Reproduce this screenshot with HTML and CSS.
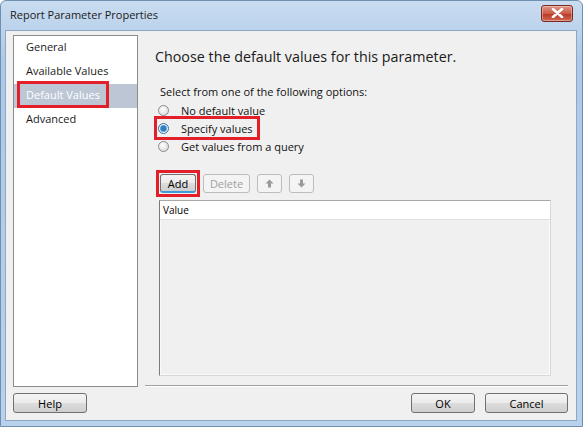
FILE: index.html
```html
<!DOCTYPE html>
<html lang="en">
<head>
  <meta charset="UTF-8">
  <title>Report Parameter Properties</title>
  <link rel="stylesheet" href="styles.css">
</head>
<body>
  <div class="window">
    <div class="titlebar">
      <span class="title">Report Parameter Properties</span>
      <button class="close" aria-label="Close">
        <svg width="13" height="10" viewBox="0 0 13 10">
          <path d="M2 1 L11 9 M11 1 L2 9" stroke="#fff" stroke-width="2.6" stroke-linecap="round"/>
        </svg>
      </button>
    </div>

    <div class="client">
      <div class="main">
        <ul class="nav">
          <li>General</li>
          <li>Available Values</li>
          <li class="selected"><span class="mark">Default Values</span></li>
          <li>Advanced</li>
        </ul>

        <div class="page">
          <h2>Choose the default values for this parameter.</h2>
          <p class="hint">Select from one of the following options:</p>
          <div class="opt"><label><span class="radio"></span>No default value</label></div>
          <div class="opt"><label class="mark"><span class="radio checked"></span>Specify values</label></div>
          <div class="opt"><label><span class="radio"></span>Get values from a query</label></div>

          <div class="tools">
            <span class="mark add-mark"><button class="btn small focus">Add</button></span>
            <button class="btn small delete" disabled>Delete</button>
            <button class="btn small icon" disabled>
              <svg width="9" height="9" viewBox="0 0 9 9"><path d="M4.5 0.5 L8.5 4.5 H6 V8.5 H3 V4.5 H0.5 Z" fill="#9a9a9a"/></svg>
            </button>
            <button class="btn small icon" disabled>
              <svg width="9" height="9" viewBox="0 0 9 9"><path d="M4.5 8.5 L8.5 4.5 H6 V0.5 H3 V4.5 H0.5 Z" fill="#9a9a9a"/></svg>
            </button>
          </div>

          <div class="grid">
            <div class="grid-head">Value</div>
          </div>
        </div>
      </div>

      <div class="footer">
        <button class="btn help">Help</button>
        <div class="actions">
          <button class="btn ok">OK</button>
          <button class="btn cancel">Cancel</button>
        </div>
      </div>
    </div>
  </div>
</body>
</html>
```

FILE: styles.css
```css
body {
  margin: 0;
  font-family: "Open Sans", "DejaVu Sans", sans-serif;
  font-size: 11px;
  color: #000;
  background: #fff;
}
.window {
  width: 583px;
  height: 427px;
  box-sizing: border-box;
  background: linear-gradient(#c9dcf0, #adc9e7 60px, #b8d1ec);
  border: 1px solid #6f8fb0;
  border-radius: 6px 6px 0 0;
  display: flex;
  flex-direction: column;
}
.titlebar {
  height: 27px;
  display: flex;
  align-items: center;
  justify-content: space-between;
  padding: 0 9px 2px 9px;
}
.title {
  font-size: 11px;
  color: #1a1a1a;
}
.close {
  width: 32px;
  height: 17px;
  margin-top: -3px;
  border: 1px solid #7a2a22;
  border-radius: 3px;
  background: linear-gradient(#e09584, #cc5a48 50%, #b93424 51%, #d06a52);
  display: flex;
  align-items: center;
  justify-content: center;
  padding: 0;
  box-shadow: inset 0 0 0 1px rgba(255,255,255,0.35);
}
.client {
  flex: 1;
  margin: 0 5px 5px 4px;
  background: #f0f0f0;
  border: 1px solid #8ea7c4;
  padding: 4px 8px 0 7px;
  display: flex;
  flex-direction: column;
}
.main {
  display: flex;
  height: 352px;
}
.nav {
  list-style: none;
  margin: 0;
  padding: 0;
  width: 123px;
  background: #fff;
  border: 1px solid #8c8c8c;
}
.nav li {
  height: 24px;
  line-height: 22px;
  padding-left: 12px;
  font-size: 11px;
  color: #1a1a1a;
}
.nav li.selected {
  background: #bcc6d5;
  color: #fff;
}
.mark {
  outline: 3px solid #e3202a;
}
.nav .mark {
  padding: 0 3px;
  margin-left: -3px;
  outline-offset: 3px;
}
.page {
  flex: 1;
  margin-left: 7px;
  border-bottom: 1px solid #a0a0a0;
  box-shadow: 0 1px 0 #fff;
  margin-bottom: 1px;
}
.page h2 {
  font-size: 14.3px;
  font-weight: normal;
  margin: 12px 0 0 10px;
  line-height: 20px;
  color: #1a1a1a;
}
.hint {
  margin: 17px 0 1px 15px;
  line-height: 16px;
  font-size: 11px;
  color: #111;
}
.opt {
  height: 18px;
  margin-left: 13px;
  font-size: 11px;
  color: #111;
}
.opt label {
  display: inline-flex;
  align-items: center;
  height: 18px;
}
.opt .mark {
  padding: 0 4px 0 1px;
  margin-left: -1px;
  outline-offset: 0;
}
.radio {
  width: 11px;
  height: 11px;
  border-radius: 50%;
  border: 1px solid #8a8a8a;
  background: radial-gradient(circle at 40% 35%, #fff, #d4d4d4);
  margin-right: 12px;
  box-sizing: border-box;
}
.radio.checked {
  background: radial-gradient(circle, #2d7fc1 0 2.5px, #8fc3ea 3.5px, #f4f4f4 4px);
  border-color: #3c6e99;
}
.tools {
  display: flex;
  align-items: center;
  gap: 7px;
  margin: 19px 0 0 15px;
}
.add-mark {
  display: flex;
  outline-offset: 1px;
}
.btn {
  font-family: inherit;
  font-size: 11px;
  color: #000;
  border: 1px solid #707070;
  border-radius: 3px;
  background: linear-gradient(#f4f4f4, #ebebeb 50%, #dddddd 51%, #cfcfcf);
  padding: 0;
}
.btn.small {
  height: 19px;
  padding: 0 5px;
}
.btn[disabled] {
  color: #a0a0a0;
  border-color: #bdbdbd;
  background: #f4f4f4;
}
.btn.focus {
  width: 36px;
  border-bottom: 2px solid #3c9bd6;
}
.btn.delete {
  width: 47px;
}
.btn.icon {
  width: 25px;
  display: flex;
  align-items: center;
  justify-content: center;
}
.grid {
  margin: 7px 17px 0 14px;
  height: 174px;
  border: 1px solid #d8d8d8;
  border-top-color: #a8a8a8;
  border-left-color: #7a7a7a;
  box-shadow: inset 0 0 0 1px #fafafa;
}
.grid-head {
  height: 18px;
  line-height: 18px;
  background: #fff;
  border-bottom: 1px solid #e0e0e0;
  padding-left: 3px;
  font-size: 10px;
}
.footer {
  display: flex;
  justify-content: space-between;
  padding-top: 6px;
}
.footer .btn {
  height: 20px;
}
.help {
  width: 74px;
}
.actions {
  display: flex;
  gap: 10px;
}
.ok {
  width: 64px;
}
.cancel {
  width: 83px;
}
```
